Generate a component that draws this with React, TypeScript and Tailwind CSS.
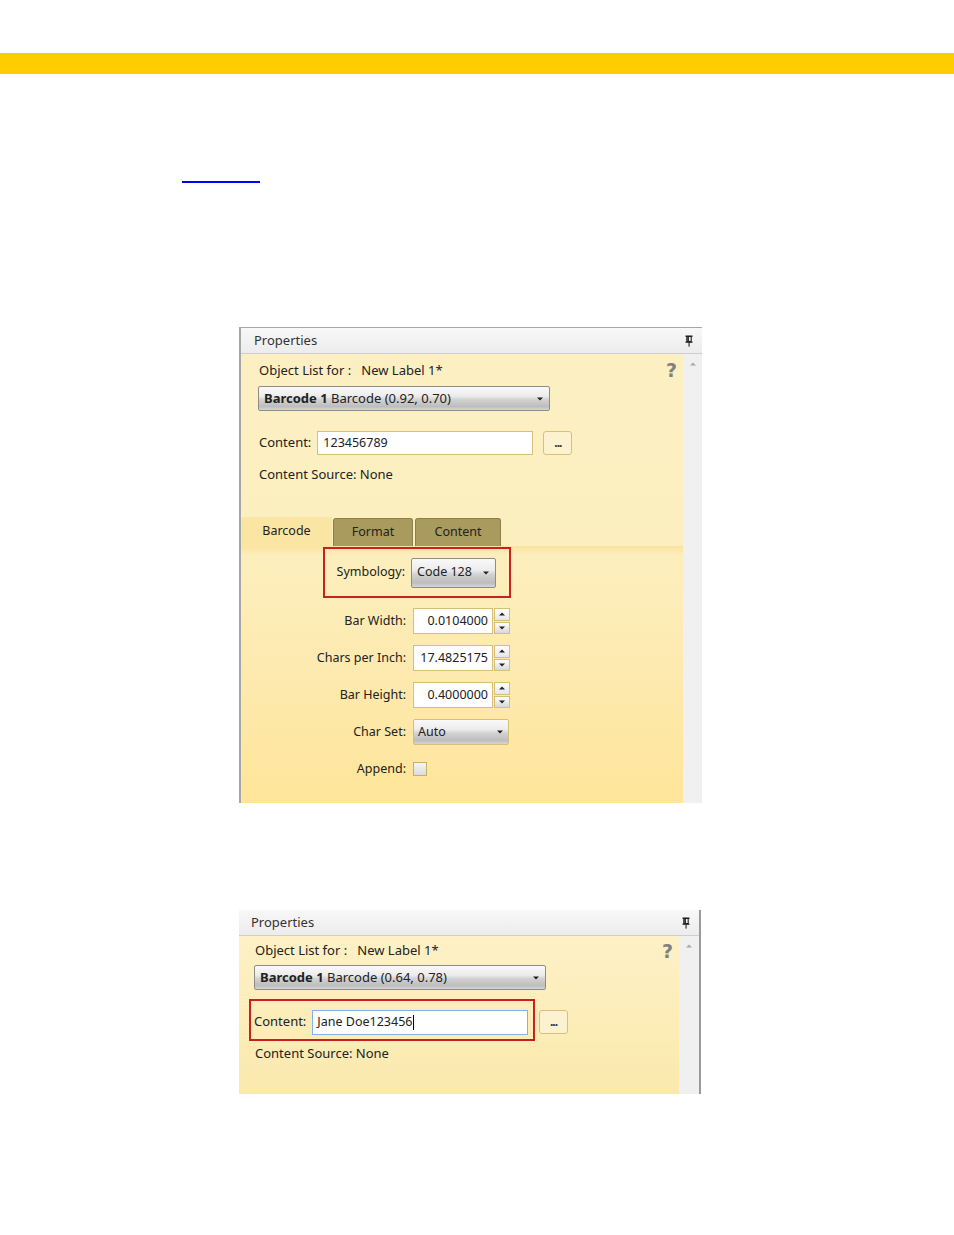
import React from "react";

const font = { fontFamily: '"Noto Sans", "Open Sans", Arial, sans-serif' };

function PinIcon() {
  return (
    <svg width="8" height="12" viewBox="0 0 8 12" className="block">
      <rect x="0.5" y="0.5" width="7" height="1.4" fill="#222" />
      <rect x="1.8" y="1.5" width="4.4" height="5" fill="none" stroke="#222" strokeWidth="1.1" />
      <rect x="2.3" y="1.8" width="1.6" height="4.5" fill="#222" />
      <rect x="0.5" y="6.6" width="7" height="1.2" fill="#222" />
      <rect x="3.5" y="7.6" width="1.1" height="4" fill="#222" />
    </svg>
  );
}

function Caret() {
  return (
    <svg width="6" height="4" viewBox="0 0 6 4" className="block">
      <path d="M0 0.5 L6 0.5 L3 3.5 Z" fill="#222" />
    </svg>
  );
}

function Header({ pl }: { pl: string }) {
  return (
    <div className="flex h-[26px] items-center justify-between border-b border-[#cfcfcf] bg-[linear-gradient(to_bottom,#f8f8f8,#ececec)] pr-[9px]">
      <span className={`${pl} text-[13px] text-[#333]`}>Properties</span>
      <PinIcon />
    </div>
  );
}

function ScrollStrip({ w }: { w: string }) {
  return (
    <div className={`flex ${w} shrink-0 justify-center bg-[#f0f0f0] pt-[8px]`}>
      <svg width="6" height="4" viewBox="0 0 6 4" className="block">
        <path d="M0 3.5 L6 3.5 L3 0.5 Z" fill="#a8a8a8" />
      </svg>
    </div>
  );
}

const glossy =
  "bg-[linear-gradient(to_bottom,#f9f9f9_0%,#ececec_40%,#d2d2d2_55%,#bdbdbd_85%,#d6d6d6_100%)]";

function ObjectSelect({ coords }: { coords: string }) {
  return (
    <div className={`flex h-[25px] w-[292px] items-center justify-between rounded-[2px] border border-[#8c8c8c] ${glossy} pl-[5px] pr-[6px] text-[13px] text-[#222]`}>
      <span>
        <b className="font-bold">Barcode 1</b> Barcode ({coords})
      </span>
      <Caret />
    </div>
  );
}

function EllipsisButton() {
  return (
    <div className="flex h-[24px] w-[29px] items-end justify-center rounded-[3px] border border-[#d9c07a] bg-[#fdf2cf] pb-[5px] text-[12px] font-bold leading-none tracking-[-1px] text-[#333]">
      ...
    </div>
  );
}

function QuestionMark() {
  return (
    <span className="text-[19px] font-bold leading-none text-[#808080]" style={{ fontFamily: '"DejaVu Sans", sans-serif' }}>
      ?
    </span>
  );
}

function Spin({ value }: { value: string }) {
  return (
    <div className="flex h-[26px] items-center">
      <div className="flex h-[26px] w-[80px] items-center justify-end border border-[#d7bf78] bg-white pr-[4px] text-[12.5px] text-[#222]">
        {value}
      </div>
      <div className="flex h-[26px] w-[17px] flex-col gap-[1px] pl-[1px]">
        <div className="flex flex-1 items-center justify-center border border-[#d7bf78] bg-[linear-gradient(to_bottom,#ffffff,#e6e6e6)]">
          <svg width="6" height="4" viewBox="0 0 6 4"><path d="M0 3.5 L6 3.5 L3 0.5 Z" fill="#222" /></svg>
        </div>
        <div className="flex flex-1 items-center justify-center border border-[#d7bf78] bg-[linear-gradient(to_bottom,#ffffff,#d8d8d8)]">
          <svg width="6" height="4" viewBox="0 0 6 4"><path d="M0 0.5 L6 0.5 L3 3.5 Z" fill="#222" /></svg>
        </div>
      </div>
    </div>
  );
}

function Row({ label, children }: { label: string; children: React.ReactNode }) {
  return (
    <div className="flex h-[26px] items-center">
      <div className="w-[165px] text-right text-[12.5px] text-[#222]">{label}</div>
      <div className="ml-[7px]">{children}</div>
    </div>
  );
}

export default function App() {
  return (
    <div className="min-h-[1235px] w-[954px] bg-white" style={font}>
      <div className="h-[53px]" />
      <div className="h-[21px] bg-[#ffcc00]" />
      <div className="ml-[182px] mt-[107px] h-[2px] w-[78px] bg-[#0000ff]" />

      {/* Panel 1 */}
      <div className="ml-[239px] mt-[144px] w-[463px] border-l-2 border-t border-[#a6a6a6]">
        <Header pl="pl-[13px]" />
        <div className="flex h-[449px]">
          <div className="relative flex w-[442px] flex-col bg-[linear-gradient(to_bottom,#fcf0c3_0%,#fcefbf_40%,#fdeab0_70%,#fee599_100%)]">
            <div className="absolute right-[6px] top-[5px]">
              <QuestionMark />
            </div>
            <div className="pl-[18px] pt-[7px] text-[13px] leading-[19px] text-[#222]">
              Object List for :&nbsp;&nbsp; New Label 1*
            </div>
            <div className="ml-[17px] mt-[6px]">
              <ObjectSelect coords="0.92, 0.70" />
            </div>
            <div className="ml-[18px] mt-[20px] flex items-center">
              <span className="text-[13px] text-[#222]">Content:</span>
              <div className="ml-[6px] flex h-[24px] w-[216px] items-center border border-[#d7bf78] bg-white pl-[5px] text-[12.5px] text-[#222]">
                123456789
              </div>
              <div className="ml-[10px]">
                <EllipsisButton />
              </div>
            </div>
            <div className="ml-[18px] mt-[10px] text-[13px] leading-[19px] text-[#222]">Content Source: None</div>

            {/* tabs */}
            <div className="mt-[33px] flex h-[29px] items-end">
              <div className="flex h-[29px] w-[91px] items-center justify-center rounded-tl-[3px] bg-[#fbe5a3] text-[12.5px] text-[#222]">
                Barcode
              </div>
              <div className="ml-[1px] flex h-[28px] w-[80px] items-center justify-center rounded-t-[3px] border border-b-0 border-[#8d7f48] bg-[#a99a5e] text-[12.5px] text-[#222]">
                Format
              </div>
              <div className="ml-[2px] flex h-[28px] w-[86px] items-center justify-center rounded-t-[3px] border border-b-0 border-[#8d7f48] bg-[#a99a5e] text-[12.5px] text-[#222]">
                Content
              </div>
            </div>
            <div className="relative">
              <div className="h-[8px] bg-[linear-gradient(to_bottom,#fbe3a0,#fcecb8)]" />
              <div className="absolute left-[82px] top-[1px] flex h-[51px] w-[188px] items-center border-2 border-[#cc1f24]">
                <div className="w-[80px] text-right text-[12.5px] text-[#222]">Symbology:</div>
                <div className={`ml-[6px] flex h-[30px] w-[85px] items-center justify-between rounded-[2px] border border-[#8c8c8c] ${glossy} pl-[5px] pr-[6px] text-[12.5px] text-[#222]`}>
                  <span>Code 128</span>
                  <Caret />
                </div>
              </div>
            </div>
            <div className="mt-[54px] flex flex-col gap-[11px]">
              <Row label="Bar Width:">
                <Spin value="0.0104000" />
              </Row>
              <Row label="Chars per Inch:">
                <Spin value="17.4825175" />
              </Row>
              <Row label="Bar Height:">
                <Spin value="0.4000000" />
              </Row>
              <Row label="Char Set:">
                <div className={`flex h-[26px] w-[96px] items-center justify-between rounded-[2px] border border-[#d7bf78] ${glossy} pl-[4px] pr-[5px] text-[12.5px] text-[#222]`}>
                  <span>Auto</span>
                  <Caret />
                </div>
              </Row>
              <Row label="Append:">
                <div className="h-[14px] w-[14px] border border-[#c9b06a] bg-[linear-gradient(to_bottom,#f4f4f4,#dcdcdc)]" />
              </Row>
            </div>
          </div>
          <ScrollStrip w="w-[19px]" />
        </div>
      </div>

      {/* Panel 2 */}
      <div className="ml-[239px] mt-[107px] w-[462px] border-r-2 border-[#9a9a9a]">
        <Header pl="pl-[12px]" />
        <div className="flex h-[158px]">
          <div className="relative flex w-[440px] flex-col bg-[linear-gradient(to_bottom,#fdf1c6,#fbe9ac)]">
            <div className="absolute right-[6px] top-[4px]">
              <QuestionMark />
            </div>
            <div className="pl-[16px] pt-[5px] text-[13px] leading-[19px] text-[#222]">
              Object List for :&nbsp;&nbsp; New Label 1*
            </div>
            <div className="ml-[15px] mt-[5px]">
              <ObjectSelect coords="0.64, 0.78" />
            </div>
            <div className="ml-[10px] mt-[9px] flex items-center">
              <div className="flex h-[42px] w-[286px] items-center border-2 border-[#cc1f24] pl-[3px] pt-[4px]">
                <span className="text-[13px] text-[#222]">Content:</span>
                <div className="ml-[6px] flex h-[25px] w-[216px] items-center border border-[#7eb4ea] bg-white pl-[4px] text-[12.5px] text-[#222]">
                  Jane Doe123456<span className="ml-[1px] inline-block h-[15px] w-[1px] bg-black" />
                </div>
              </div>
              <div className="ml-[4px] mt-[4px]">
                <EllipsisButton />
              </div>
            </div>
            <div className="ml-[16px] mt-[3px] text-[13px] leading-[19px] text-[#222]">Content Source: None</div>
          </div>
          <ScrollStrip w="w-[20px]" />
        </div>
      </div>
    </div>
  );
}
